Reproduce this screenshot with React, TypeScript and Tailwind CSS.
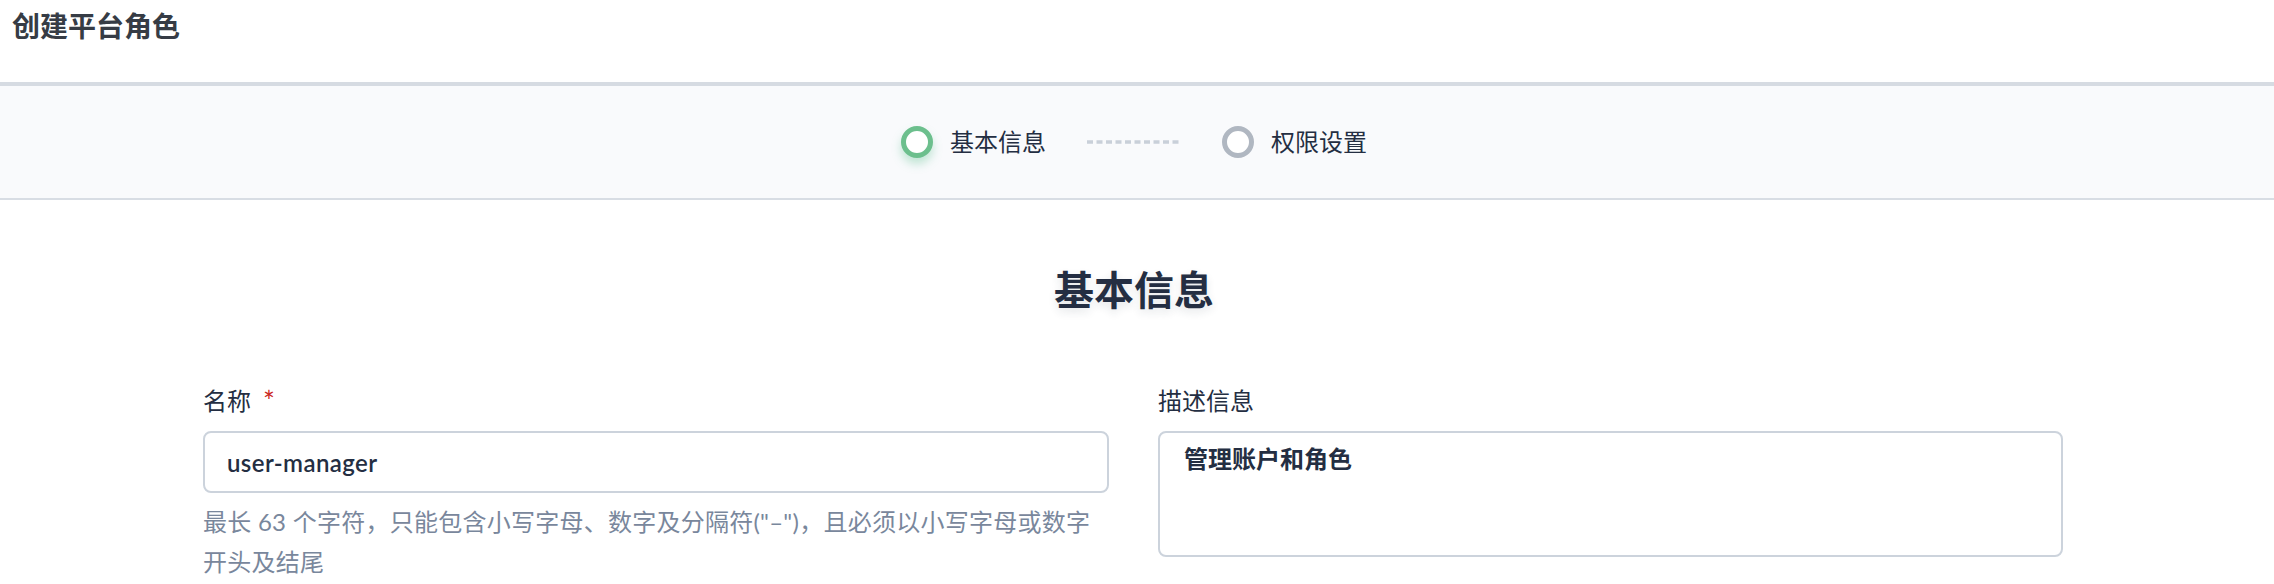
import { useState } from 'react';

const steps = [
  { key: 'base', label: '基本信息', active: true },
  { key: 'auth', label: '权限设置', active: false },
];

function StepDot({ active }: { active: boolean }) {
  return active ? (
    <span className="w-8 h-8 rounded-full border-[5px] border-[#6cbf8d] bg-white shadow-[0_6px_10px_rgba(85,188,138,0.35)]" />
  ) : (
    <span className="w-8 h-8 rounded-full border-[5px] border-[#b0b7c1] bg-white" />
  );
}

export default function App() {
  const [name, setName] = useState('user-manager');
  const [desc, setDesc] = useState('管理账户和角色');

  return (
    <div className="min-h-screen bg-white text-[#242e42] font-['Lato','Noto_Sans_CJK_SC',sans-serif]">
      <header className="h-[86px] border-b-4 border-[#d6dbe2] px-3 pt-2">
        <h1 className="text-[28px] leading-9 font-semibold text-[#363c45]">创建平台角色</h1>
      </header>

      <nav className="h-[114px] bg-[#f9fafc] border-b-2 border-[#d8dde4] flex items-center justify-center pr-[6px]">
        {steps.map((s, i) => (
          <div key={s.key} className="flex items-center">
            {i > 0 && (
              <svg className="ml-[41px] mr-[40px]" width="95" height="4" viewBox="0 0 95 4">
                <line x1="0" y1="2" x2="95" y2="2" stroke="#c9d0d9" strokeWidth="3.5" strokeDasharray="6 3.5" />
              </svg>
            )}
            <StepDot active={s.active} />
            <span className="ml-[17px] text-[24px] leading-8">{s.label}</span>
          </div>
        ))}
      </nav>

      <main className="pb-4 pr-[6px]">
        <h2 className="mt-[66px] text-center text-[40px] leading-[48px] font-bold [text-shadow:0_4px_8px_rgba(36,46,66,0.12)]">
          基本信息
        </h2>

        <div className="mt-[71px] ml-[203px] w-[1860px] grid grid-cols-[906px_905px] gap-x-[49px]">
          <div>
            <label className="flex items-center text-[24px] leading-8 mb-[14px]">
              名称<span className="ml-[12px] text-[28px] leading-8 text-[#ca2621]">*</span>
            </label>
            <input
              value={name}
              onChange={e => setName(e.target.value)}
              className="w-full h-[62px] rounded-lg border-2 border-[#ccd3dc] px-[22px] text-[24px] tracking-[0.4px] font-semibold text-[#242e42] outline-none font-['Lato','Noto_Sans_CJK_SC',sans-serif]"
            />
            <p className="mt-[9px] pr-[10px] text-[24px] leading-10 tracking-[0.25px] text-[#79879c]">
              最长 63 个字符，只能包含小写字母、数字及分隔符("–")，且必须以小写字母或数字开头及结尾
            </p>
          </div>
          <div>
            <label className="block text-[24px] leading-8 mb-[14px]">描述信息</label>
            <textarea
              value={desc}
              onChange={e => setDesc(e.target.value)}
              className="block w-full h-[126px] resize-none rounded-lg border-2 border-[#ccd3dc] px-[24px] pt-[10px] text-[24px] leading-8 font-semibold text-[#242e42] outline-none font-['Lato','Noto_Sans_CJK_SC',sans-serif]"
            />
          </div>
        </div>
      </main>
    </div>
  );
}
